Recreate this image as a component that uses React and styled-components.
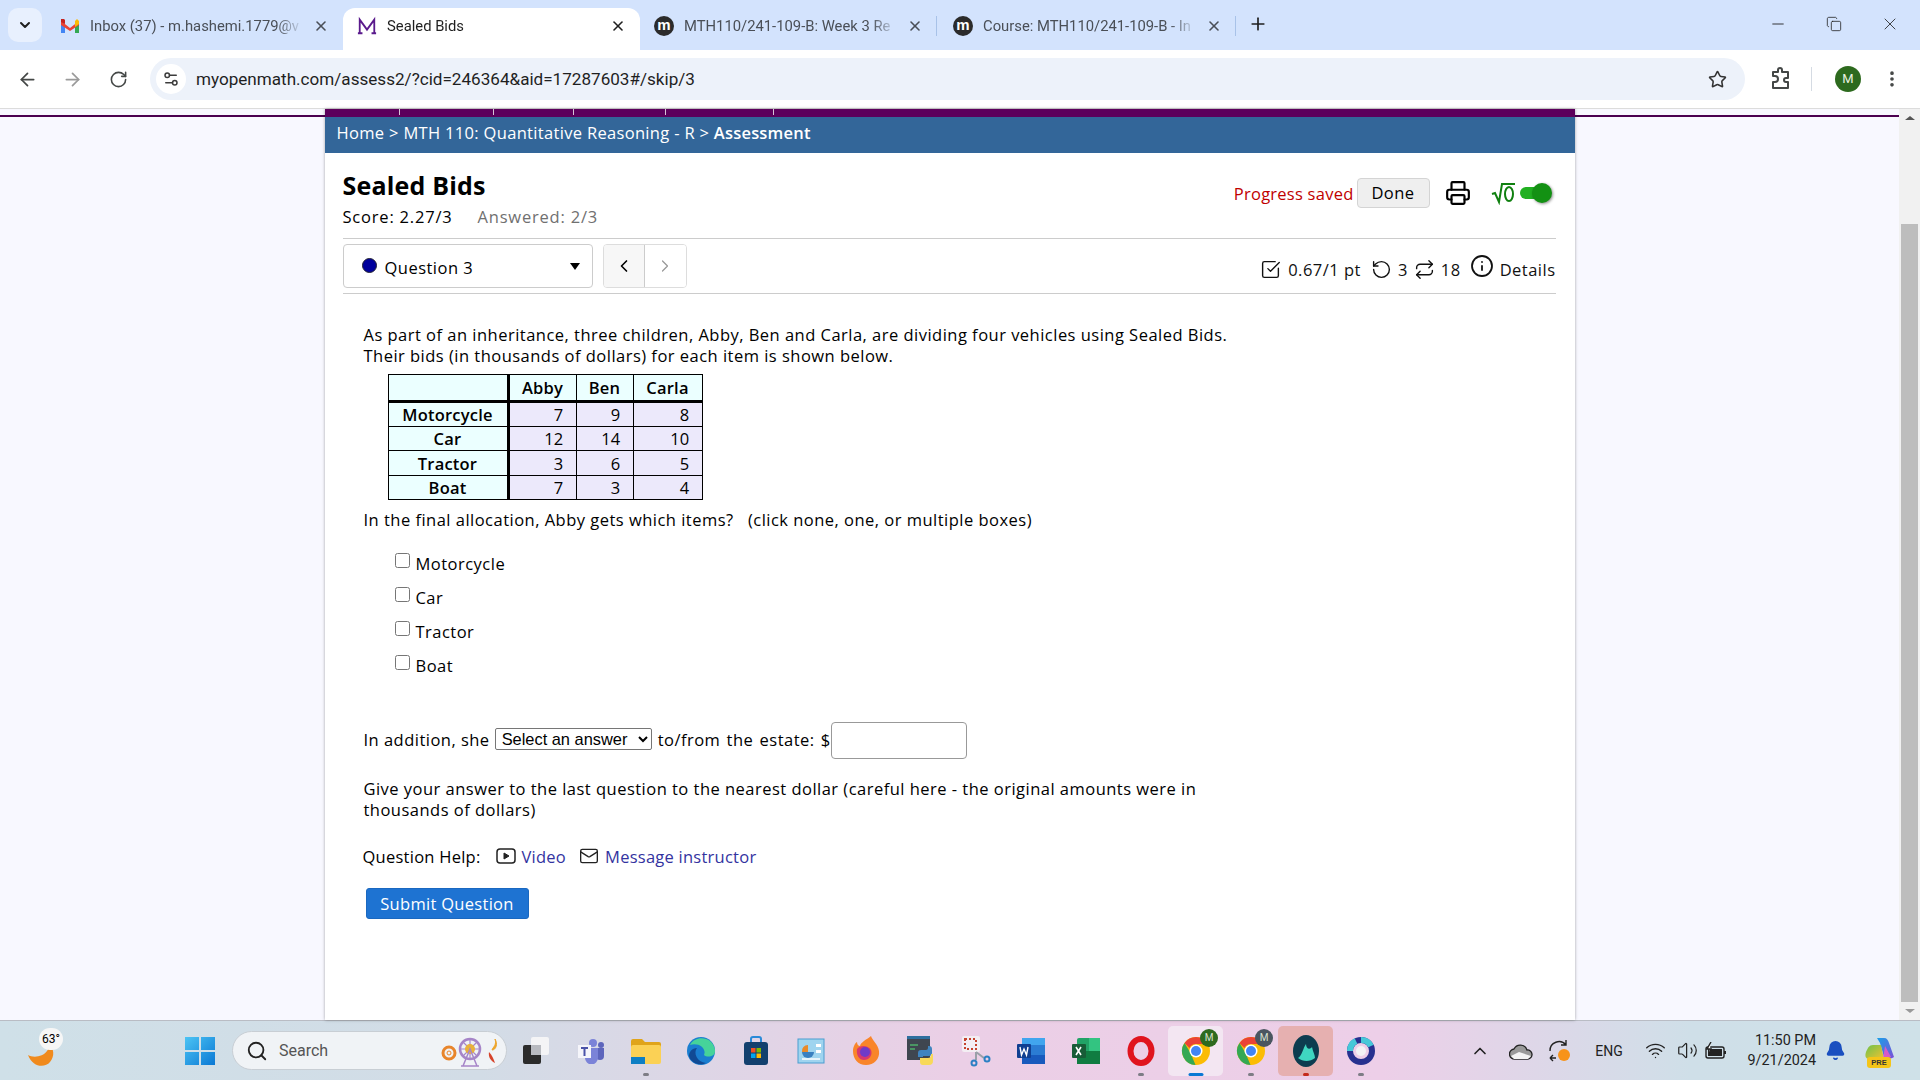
import React from 'react';
import styled, { createGlobalStyle } from 'styled-components';
import {
  ArrowLeft, ArrowRight, RotateCw, X, Plus, Minus, Star, EllipsisVertical, ChevronDown,
  ChevronLeft, ChevronRight, ChevronUp, Printer, SquareCheckBig, RotateCcw, Repeat, Info, Mail,
  Search, Wifi, Volume2, Bell, Settings2, Copy,
} from 'lucide-react';

const pageFont = '"Open Sans", sans-serif';
const textSize = '16.5px';
const textSpacing = '0.48px';

const GlobalStyle = createGlobalStyle`
  html, body { margin: 0; padding: 0; height: 100%; overflow: hidden; }
  body { font-family: ${pageFont}; color: #000; }
  * { box-sizing: border-box; }
`;

const Screen = styled.div`
  width: 1920px;
  height: 1080px;
  display: flex;
  flex-direction: column;
  overflow: hidden;
`;

/* browser chrome */
const TabStrip = styled.div`
  height: 50px;
  background: #d3e3fd;
  display: flex;
  align-items: flex-start;
  padding: 8px 2px 0 8px;
  position: relative;
`;

const TabSearch = styled.div`
  width: 34px;
  height: 34px;
  border-radius: 10px;
  background: #e8f0fe;
  display: flex;
  align-items: center;
  justify-content: center;
  margin-right: 4px;
  color: #1f1f1f;
`;

const Tab = styled.div`
  width: 297px;
  height: 42px;
  display: flex;
  align-items: center;
  padding: 0 14px 6px 14px;
  gap: 10px;
  border-radius: 12px 12px 0 0;
  background: ${({ $active }) => ($active ? '#fff' : 'transparent')};
  font-family: "Roboto", sans-serif;
  font-size: 14.8px;
  color: ${({ $active }) => ($active ? '#1f1f1f' : '#4a4f57')};
`;

const TabTitle = styled.span`
  flex: 1;
  white-space: nowrap;
  overflow: hidden;
  mask-image: linear-gradient(to right, #000 88%, transparent);
`;

const TabDivider = styled.div`
  width: 1px;
  height: 20px;
  background: #a8c2e8;
  margin: 8px 2px 0 -1px;
`;

const NewTab = styled.div`
  color: #1f1f1f;
  display: flex;
  margin: 6px 0 0 10px;
`;

const WindowControls = styled.div`
  margin-left: auto;
  display: flex;
  align-items: center;
  height: 32px;
  color: #222;
`;

const WindowButton = styled.div`
  width: 56px;
  display: flex;
  justify-content: center;
`;

const MomIcon = styled.span`
  width: 20px;
  height: 20px;
  border-radius: 50%;
  background: #2b2b2b;
  color: #fff;
  font: bold 15px/17px "Liberation Sans", sans-serif;
  text-align: center;
  flex: none;
`;

const Toolbar = styled.div`
  height: 59px;
  background: #fff;
  border-radius: 10px 10px 0 0;
  border-bottom: 1px solid #dcdcdc;
  display: flex;
  align-items: center;
  padding-left: 5px;
  color: #444746;
`;

const NavSlot = styled.div`
  width: ${({ $w }) => $w || 45}px;
  display: flex;
  justify-content: center;
  color: ${({ $dim }) => ($dim ? '#9a9a9a' : '#444746')};
`;

const Omnibox = styled.div`
  width: 1595px;
  height: 42px;
  margin-left: 9px;
  border-radius: 21px;
  background: #edf2fa;
  display: flex;
  align-items: center;
  padding: 0 18px 0 6px;
  font-family: "Roboto", sans-serif;
  font-size: 17.1px;
  color: #1f1f1f;
`;

const TuneButton = styled.div`
  width: 30px;
  height: 30px;
  border-radius: 50%;
  background: #fff;
  display: flex;
  align-items: center;
  justify-content: center;
  margin-right: 10px;
`;

const Url = styled.span`
  flex: 1;
`;

const ToolDivider = styled.div`
  width: 1px;
  height: 24px;
  background: #d5dbe3;
  margin: 0 8px 0 -6px;
`;

const Avatar = styled.div`
  width: 26px;
  height: 26px;
  border-radius: 50%;
  background: #2d6a1e;
  color: #e8f0e0;
  font: 13px/26px "Roboto", sans-serif;
  text-align: center;
  margin: 0 21px 0 15px;
`;

/* page */
const Viewport = styled.div`
  flex: 1;
  min-height: 0;
  display: flex;
  background: #f8f8ff;
`;

const PageArea = styled.div`
  flex: 1;
  display: flex;
  justify-content: center;
  position: relative;
`;

const OuterRule = styled.div`
  position: absolute;
  top: 6px;
  left: 0;
  right: 0;
  height: 2px;
  background: #4b0050;
`;

const Panel = styled.main`
  width: 1250px;
  background: #fff;
  position: relative;
  box-shadow: 0 0 3px rgba(0, 0, 0, 0.35);
`;

const PurpleBar = styled.div`
  height: 8px;
  background: #5c005c;
  display: flex;
  padding-left: 74px;
`;

const PurpleTick = styled.div`
  width: ${({ $w }) => $w}px;
  height: 6px;
  border-left: 1px solid #d8c4d8;
`;

const Breadcrumb = styled.div`
  height: 36px;
  background: #336699;
  color: #fff;
  font-size: ${textSize};
  font-weight: 500;
  letter-spacing: 0.32px;
  line-height: 31px;
  padding-left: 12px;
`;

const Current = styled.span`
  font-weight: 600;
  letter-spacing: 0.2px;
`;

const Content = styled.div`
  padding: 0 19px 0 18px;
`;

const HeaderRow = styled.div`
  height: 86px;
  border-bottom: 1px solid #ccc;
  display: flex;
  justify-content: space-between;
`;

const HeaderLeft = styled.div`
  padding-top: 16px;
`;

const Title = styled.h1`
  margin: 0;
  font-size: 25px;
  line-height: 32px;
  font-weight: 700;
  letter-spacing: 0.2px;
`;

const ScoreLine = styled.div`
  display: flex;
  gap: 25px;
  margin-top: 5px;
  font-size: ${textSize};
  letter-spacing: 0.8px;
  line-height: 22px;
`;

const Answered = styled.span`
  color: #707070;
`;

const HeaderRight = styled.div`
  display: flex;
  align-items: center;
  height: 48px;
  margin-top: 16px;
`;

const Saved = styled.span`
  color: #c00000;
  font-size: ${textSize};
  letter-spacing: 0.25px;
  margin-right: 3px;
`;

const DoneButton = styled.div`
  width: 73px;
  height: 30px;
  background: #efefef;
  border: 1px solid #d4d4d4;
  border-radius: 4px;
  font-size: ${textSize};
  letter-spacing: ${textSpacing};
  line-height: 28px;
  text-align: center;
  margin-right: 15px;
`;

const MathToggle = styled.div`
  display: flex;
  align-items: center;
  margin: 0 8px 0 20px;
  color: #108010;
`;

const ToggleTrack = styled.div`
  width: 28px;
  height: 12px;
  border-radius: 6px;
  background: #21b021;
  margin-left: 4px;
  position: relative;
`;

const ToggleKnob = styled.div`
  position: absolute;
  right: -4px;
  top: -4px;
  width: 20px;
  height: 20px;
  border-radius: 50%;
  background: #139113;
  box-shadow: 1px 1px 3px rgba(0, 0, 0, 0.45);
`;

const NavRow = styled.div`
  height: 55px;
  border-bottom: 1px solid #ccc;
  display: flex;
  align-items: flex-start;
  padding-top: 5px;
`;

const QuestionSelect = styled.div`
  width: 250px;
  height: 44px;
  border: 1px solid #ccc;
  border-radius: 4px;
  display: flex;
  align-items: center;
  padding: 2px 12px 0 18px;
  font-size: ${textSize};
  letter-spacing: ${textSpacing};
`;

const Dot = styled.span`
  width: 15px;
  height: 15px;
  border-radius: 50%;
  background: #00009c;
  border: 1px solid #223;
  margin: -4px 8px 0 0;
`;

const Caret = styled.span`
  margin: -2px 0 0 auto;
  width: 0;
  height: 0;
  border-left: 5px solid transparent;
  border-right: 5px solid transparent;
  border-top: 7px solid #000;
`;

const PagerGroup = styled.div`
  display: flex;
  margin-left: 10px;
  height: 44px;
  width: 84px;
  border: 1px solid #ddd;
  border-radius: 4px;
  overflow: hidden;
`;

const PagerButton = styled.div`
  width: 42px;
  display: flex;
  align-items: center;
  justify-content: center;
  background: ${({ $off }) => ($off ? '#fff' : '#f7f7f7')};
  color: ${({ $off }) => ($off ? '#999' : '#000')};
  border-right: ${({ $off }) => ($off ? 'none' : '1px solid #ccc')};
`;

const Stats = styled.div`
  margin-left: auto;
  display: flex;
  align-items: center;
  height: 46px;
  font-size: ${textSize};
  letter-spacing: ${textSpacing};
  color: #111;
`;

const Stat = styled.span`
  display: flex;
  align-items: center;
  gap: ${({ $gap }) => $gap || 4}px;
  margin-left: ${({ $ml }) => $ml || 0}px;
  padding-top: 5px;
`;

const RaisedIcon = styled.span`
  display: flex;
  margin-top: -7px;
`;

const Body = styled.div`
  padding-left: 21px;
  font-size: ${textSize};
  letter-spacing: ${textSpacing};
  line-height: 21px;
`;

const Para = styled.p`
  margin: ${({ $mt }) => $mt}px 0 0;
`;

const BidTable = styled.table`
  border-collapse: collapse;
  margin: 8px 0 0 24px;
  table-layout: fixed;
  width: 314px;
  line-height: 20px;

  td, th {
    border: 1px solid #000;
    padding: 2px 0 0;
    height: 24.5px;
    font-weight: 600;
    letter-spacing: 0.2px;
  }
`;

const HeadCell = styled.th`
  background: #ebffff;
  text-align: center;
  width: ${({ $w }) => $w}px;

  &&& {
    border-bottom: 3px solid #000;
    height: 27px;
    padding-top: 0;
    ${({ $corner }) => $corner && 'border-right: 3px solid #000;'}
  }
`;

const RowCell = styled.td`
  background: #ebffff;
  text-align: center;

  &&& {
    border-right: 3px solid #000;
  }
`;

const DataCell = styled.td`
  background: #ece9fb;
  text-align: right;

  &&& {
    padding-right: 12px;
    font-weight: 400;
  }
`;

const Choices = styled.div`
  margin: 16px 0 0 31px;
`;

const Choice = styled.label`
  height: 34px;
  display: flex;
  align-items: center;
  gap: 6px;
`;

const Check = styled.input`
  width: 15px;
  height: 15px;
  margin: -6px 0 0 0;
`;

const FillRow = styled.div`
  margin-top: 40px;
  height: 36px;
  display: flex;
  align-items: center;
  white-space: pre;
  padding-bottom: 2px;
`;

const EstateLabel = styled.span`
  word-spacing: 1.5px;
`;

const AnswerSelect = styled.select`
  width: 157px;
  height: 22px;
  margin: 0 6px 0 5px;
  font: 16.4px "Liberation Sans", sans-serif;
  letter-spacing: 0;
  background: #fff;
  border: 1px solid #767676;
  border-radius: 2px;
  padding: 0 0 0 2px;
`;

const AmountInput = styled.input`
  width: 136px;
  height: 37px;
  border: 1px solid #999;
  border-radius: 4px;
  margin: 2px 0 0;
`;

const HelpRow = styled.div`
  margin: 24px 0 0 -1px;
  height: 24px;
  display: flex;
  align-items: center;
  letter-spacing: 0.25px;
`;

const HelpLink = styled.a`
  color: #33339f;
  display: flex;
  align-items: center;
  margin-left: ${({ $ml }) => $ml}px;
  gap: 6px;
`;

const SubmitButton = styled.button`
  display: block;
  width: 163px;
  height: 31px;
  margin: 20px 0 0 2px;
  background: #1e73d2;
  border: 1px solid #1a68c0;
  border-radius: 3px;
  color: #fff;
  font: 500 ${textSize} ${pageFont};
  letter-spacing: 0.3px;
  padding: 0;
`;

const Scrollbar = styled.div`
  width: 21px;
  background: #f1f1f1;
  display: flex;
  flex-direction: column;
  align-items: center;
  padding-top: 7px;
`;

const ScrollThumb = styled.div`
  width: 17px;
  height: 778px;
  flex: none;
  background: #bdbdbd;
  margin: 104px 0 7px;
`;

const ArrowUp = styled.div`
  width: 0;
  height: 0;
  border-left: 5px solid transparent;
  border-right: 5px solid transparent;
  border-bottom: 4px solid #555;
`;

const ArrowDown = styled.div`
  width: 0;
  height: 0;
  border-left: 5px solid transparent;
  border-right: 5px solid transparent;
  border-top: 4px solid #999;
`;

/* taskbar */
const Taskbar = styled.footer`
  height: 60px;
  flex: none;
  display: flex;
  align-items: center;
  border-top: 1px solid #b9bcc4;
  background: linear-gradient(90deg, #cfe0e8 0%, #d2dce6 25%, #ebcfe6 50%, #edcfe8 72%, #cfdfe8 88%, #cfe1e8 100%);
  font-family: "Roboto", sans-serif;
`;

const Slot = styled.div`
  width: ${({ $w }) => $w || 55}px;
  height: 50px;
  flex: none;
  display: flex;
  align-items: center;
  justify-content: center;
  position: relative;
  border-radius: 5px;
  background: ${({ $bg }) => $bg || 'transparent'};
`;

const WeatherSlot = styled(Slot)`
  justify-content: flex-start;
  padding: 8px 0 0 27px;
`;

const RunDot = styled.span`
  position: absolute;
  bottom: 0;
  left: 50%;
  transform: translateX(-50%);
  width: ${({ $wide }) => ($wide ? 15 : 6)}px;
  height: 3px;
  border-radius: 2px;
  background: ${({ $color }) => $color || '#7d7d85'};
`;

const WeatherTemp = styled.span`
  position: absolute;
  top: 2px;
  left: 39px;
  width: 24px;
  height: 22px;
  border-radius: 11px;
  background: #f6f6f6;
  font-size: 12px;
  line-height: 22px;
  text-align: center;
`;

const SearchPill = styled.div`
  width: 275px;
  height: 39px;
  margin: 0 1px 0 6px;
  border-radius: 20px;
  background: #f0f3f6;
  border: 1px solid #c8ced4;
  display: flex;
  align-items: center;
  padding: 0 5px 0 13px;
  color: #555;
  font-size: 16px;
  gap: 11px;
`;

const SearchArt = styled.span`
  margin-left: auto;
  display: flex;
`;

const Badge = styled.span`
  position: absolute;
  top: 3px;
  right: 5px;
  width: 18px;
  height: 18px;
  border-radius: 50%;
  background: ${({ $bg }) => $bg};
  color: #d8e0d0;
  font-size: 10px;
  line-height: 18px;
  text-align: center;
`;

const Tray = styled.div`
  margin-left: auto;
  display: flex;
  align-items: center;
  padding-right: 12px;
  color: #222;
`;

const Eng = styled.span`
  font-size: 14px;
`;

const Clock = styled.div`
  width: 87px;
  text-align: right;
  font-size: 14.4px;
  line-height: 20px;
  padding-right: 2px;
  white-space: nowrap;
`;

const Pre = styled.span`
  position: absolute;
  bottom: 8px;
  left: 15px;
  width: 24px;
  height: 11px;
  background: #f5c518;
  border-radius: 3px;
  font: bold 7.5px/11px "Liberation Sans", sans-serif;
  text-align: center;
  color: #333;
`;

const GmailIcon = () => (
  <svg width="20" height="16" viewBox="0 0 20 16">
    <path d="M1 15V3l4 3v9z" fill="#4285f4" />
    <path d="M15 15V6l4-3v12z" fill="#34a853" />
    <path d="M1 3l9 7 9-7v4l-9 6-9-6z" fill="#ea4335" />
    <path d="M15 3l2-2 2 2v3l-4 3z" fill="#fbbc04" />
    <path d="M1 1h3l1 1v4L1 4z" fill="#c5221f" />
  </svg>
);

const SealedIcon = () => (
  <svg width="20" height="20" viewBox="0 0 22 20" fill="none" stroke="#5a1a8c" strokeWidth="2">
    <path d="M3 18V3l8 11 8-11v15" />
    <path d="M1 18h5M16 18h5" />
  </svg>
);

const TuneIcon = () => <Settings2 size={18} strokeWidth={2} color="#3c3c3c" />;

const ExtensionIcon = () => (
  <svg width="22" height="24" viewBox="0 0 22 24" fill="none" stroke="#444746" strokeWidth="2" strokeLinejoin="round">
    <path d="M3 5h5V3a2 2 0 0 1 4 0v2h6v6h-2a2 2 0 0 0 0 4h2v6H3v-6h2a3 3 0 0 0 0-6H3z" />
  </svg>
);

const RootZero = () => (
  <svg width="25" height="24" viewBox="0 0 25 24" fill="none" stroke="#108010" strokeWidth="2">
    <path d="M1 13l3-1 4 9 3-18h13" />
    <ellipse cx="18" cy="13" rx="4" ry="7" />
  </svg>
);

const PlayBoxIcon = () => (
  <svg width="20" height="16" viewBox="0 0 20 16" fill="none" stroke="#222" strokeWidth="1.5">
    <rect x="1" y="1" width="18" height="14" rx="3" />
    <path d="M8 5l5 3-5 3z" fill="#222" strokeWidth="1" />
  </svg>
);

const WeatherIcon = () => (
  <svg width="28" height="26" viewBox="0 0 28 26">
    <path d="M1 13c5 3 15 2 19-4 2-3 3-5 2-8 5 6 6 13 1 19-5 6-17 6-22-7z" fill="#f08a1d" />
  </svg>
);

const WindowsLogo = () => (
  <svg width="30" height="30" viewBox="0 0 30 30">
    <defs>
      <linearGradient id="win" x1="0" y1="0" x2="1" y2="1">
        <stop offset="0" stopColor="#4cc4f4" />
        <stop offset="1" stopColor="#0a78d4" />
      </linearGradient>
    </defs>
    <path d="M0 1h14v13H0zM16 1h14v13H16zM0 16h14v13H0zM16 16h14v13H16z" fill="url(#win)" />
  </svg>
);

const SearchArtwork = () => (
  <svg width="62" height="32" viewBox="0 0 62 32" fill="none">
    <circle cx="10" cy="18" r="6" stroke="#e8852b" strokeWidth="3" />
    <circle cx="10" cy="18" r="2" fill="#f0f3f6" stroke="#e8852b" />
    <circle cx="31" cy="14" r="10" stroke="#a685c8" strokeWidth="2.5" />
    <path d="M31 4v20M21 14h20M24 7l14 14M38 7L24 21" stroke="#a685c8" strokeWidth="1.2" />
    <circle cx="31" cy="14" r="5" fill="#e8b13c" />
    <path d="M24 31l7-17 7 17M22 31h18" stroke="#a685c8" strokeWidth="1.5" />
    <path d="M56 4c2 6-2 8-3 11 4 0 6-6 3-11z" fill="#eda52a" stroke="#eda52a" />
    <path d="M50 17c3 3 5 8 6 11-4-2-7-6-6-11z" fill="#d6432a" />
  </svg>
);

const AppIcon = ({ kind }) => {
  switch (kind) {
    case 'taskview':
      return (
        <svg width="30" height="30" viewBox="0 0 30 30">
          <rect x="10" y="1" width="18" height="18" rx="2" fill="#f4f4f6" />
          <rect x="2" y="9" width="18" height="19" rx="2" fill="#2b2b2b" />
          <rect x="10" y="9" width="10" height="10" fill="#b8bac0" />
        </svg>
      );
    case 'teams':
      return (
        <svg width="28" height="26" viewBox="0 0 28 26">
          <circle cx="16" cy="5" r="4" fill="#7b83d8" />
          <circle cx="24" cy="7" r="3" fill="#5d65bc" />
          <path d="M19 10h8v8a4 4 0 0 1-8 0z" fill="#5d65bc" />
          <path d="M8 10h13v10a6 6 0 0 1-13 0z" fill="#7b83d8" />
          <rect x="1" y="7" width="13" height="13" fill="#f5f5fa" />
          <path d="M4 10h7M7.5 10v8" stroke="#4b53a8" strokeWidth="2" />
        </svg>
      );
    case 'explorer':
      return (
        <svg width="32" height="28" viewBox="0 0 32 28">
          <path d="M1 4a2 2 0 0 1 2-2h9l3 3h14a2 2 0 0 1 2 2v4H1z" fill="#e0a41a" />
          <rect x="1" y="8" width="30" height="19" rx="2" fill="#fbd155" />
          <rect x="1" y="20" width="14" height="7" fill="#0e7fc4" />
        </svg>
      );
    case 'edge':
      return (
        <svg width="30" height="30" viewBox="0 0 30 30">
          <circle cx="15" cy="15" r="14" fill="#1a7ed0" />
          <path d="M4 9C9-1 27 0 29 14c1 7-8 8-11 5 3-7-6-13-14-10z" fill="#46d39a" />
          <path d="M11 12c-4 5 0 14 9 15-5 3-15 1-17-7 0-4 3-8 8-8z" fill="#114a94" />
        </svg>
      );
    case 'store':
      return (
        <svg width="26" height="30" viewBox="0 0 26 30">
          <path d="M8 6V3a2 2 0 0 1 2-2h6a2 2 0 0 1 2 2v3" fill="none" stroke="#2a8ad8" strokeWidth="2" />
          <rect x="1" y="6" width="24" height="23" rx="3" fill="#12406e" />
          <path d="M8 12h4.500v4.500H8z" fill="#f05022" />
          <path d="M13.500 12H18v4.500h-4.500z" fill="#7eb900" />
          <path d="M8 17.500h4.500V22H8z" fill="#00a4ef" />
          <path d="M13.500 17.500H18V22h-4.500z" fill="#ffb900" />
        </svg>
      );
    case 'control':
      return (
        <svg width="28" height="26" viewBox="0 0 28 26">
          <rect x="1" y="1" width="26" height="24" fill="#9fd4ef" stroke="#4a9dd0" />
          <path d="M5 14a6 6 0 0 1 6-7v7z" fill="#e98a2a" />
          <path d="M11 14h6a6 6 0 0 1-12 0z" fill="#3a80c0" />
          <rect x="19" y="6" width="5" height="3" fill="#fff" />
          <rect x="19" y="12" width="5" height="3" fill="#fff" />
          <path d="M5 21h18" stroke="#fff" strokeWidth="1.500" />
        </svg>
      );
    case 'firefox':
      return (
        <svg width="28" height="30" viewBox="0 0 28 30">
          <path d="M19 0c1 4 7 8 8 15 1 8-5 14-13 14S1 23 1 15C1 11 3 7 5 6c0 3 2 4 3 4 1-4 6-6 11-10z" fill="#f9852a" />
          <path d="M5 13c3-4 11-4 14 1 2 5-2 10-7 10s-8-5-7-11z" fill="#d6396e" />
          <circle cx="13" cy="16" r="5" fill="#6f3bc8" />
        </svg>
      );
    case 'python':
      return (
        <svg width="30" height="32" viewBox="0 0 30 32">
          <rect x="1" y="1" width="23" height="24" fill="#3f4650" />
          <rect x="1" y="1" width="23" height="3" fill="#2e6f9e" />
          <path d="M4 10h8M4 14h5" stroke="#4fb06a" strokeWidth="1.500" />
          <path d="M12 22v-4a3 3 0 0 1 3-3h5a2 2 0 0 0 2-2v-2h1a3 3 0 0 1 3 3v4a3 3 0 0 1-3 3h-6v1z" fill="#3f84bf" />
          <path d="M14 23h8a3 3 0 0 0 3-3v-1h2v7a4 4 0 0 1-4 4h-6a3 3 0 0 1-3-3z" fill="#f8d95a" />
        </svg>
      );
    case 'snip':
      return (
        <svg width="30" height="32" viewBox="0 0 30 32" fill="none">
          <rect x="1" y="1" width="18" height="16" rx="2" fill="#f3eef3" />
          <rect x="4" y="4" width="11" height="10" stroke="#c5432e" strokeWidth="2" strokeDasharray="2 2" />
          <path d="M15 17v8M15 17l8 6" stroke="#9aa0a8" strokeWidth="2" />
          <circle cx="13" cy="28" r="2.500" stroke="#2b80c4" strokeWidth="2" />
          <circle cx="26" cy="24" r="2.500" stroke="#2b80c4" strokeWidth="2" />
        </svg>
      );
    case 'word':
      return (
        <svg width="30" height="28" viewBox="0 0 30 28">
          <rect x="6" y="1" width="23" height="26" rx="2" fill="#2b7cd3" />
          <rect x="6" y="1" width="23" height="7" fill="#41a5ee" />
          <rect x="6" y="18" width="23" height="9" fill="#185abd" />
          <rect x="1" y="7" width="14" height="14" rx="1" fill="#103f91" />
          <path d="M4 10l1.500 8L8 12l2.500 6L12 10" fill="none" stroke="#fff" strokeWidth="1.400" />
        </svg>
      );
    case 'excel':
      return (
        <svg width="30" height="28" viewBox="0 0 30 28">
          <rect x="6" y="1" width="23" height="26" rx="2" fill="#21a366" />
          <rect x="18" y="1" width="11" height="13" fill="#33c481" />
          <rect x="6" y="14" width="23" height="13" fill="#107c41" />
          <rect x="1" y="7" width="14" height="14" rx="1" fill="#185c37" />
          <path d="M5 10l5 8M10 10l-5 8" stroke="#fff" strokeWidth="1.600" />
        </svg>
      );
    case 'opera':
      return (
        <svg width="28" height="30" viewBox="0 0 28 30">
          <ellipse cx="14" cy="15" rx="10.500" ry="12" fill="none" stroke="#e0141e" strokeWidth="6" />
        </svg>
      );
    case 'chrome':
      return (
        <svg width="30" height="30" viewBox="0 0 30 30">
          <circle cx="15" cy="15" r="14" fill="#fbbc04" />
          <path d="M15 1a14 14 0 0 1 12 7H15a7 7 0 0 0-6.500 4L3.500 7A14 14 0 0 1 15 1z" fill="#ea4335" />
          <path d="M3.500 7l6 10 5 12A14 14 0 0 1 3.500 7z" fill="#34a853" />
          <circle cx="15" cy="15" r="6.500" fill="#fff" />
          <circle cx="15" cy="15" r="5" fill="#4285f4" />
        </svg>
      );
    case 'edgeDev':
      return (
        <svg width="30" height="34" viewBox="0 0 30 34">
          <ellipse cx="15" cy="17" rx="13" ry="16" fill="#0d3c4f" />
          <path d="M7 24c4-2 5-10 8-14 0 5 4 6 6 3 1 5 3 8 3 11-5 4-12 4-17 0z" fill="#3fd6c0" />
        </svg>
      );
    default:
      return (
        <svg width="30" height="30" viewBox="0 0 30 30" fill="none">
          <circle cx="15" cy="15" r="11" stroke="#27318f" strokeWidth="6" />
          <path d="M15 4a11 11 0 0 1 10 6" stroke="#46c8d8" strokeWidth="6" />
          <path d="M4 15a11 11 0 0 1 6-10" stroke="#46c8d8" strokeWidth="6" />
          <circle cx="15" cy="15" r="5" fill="#f2f2f5" />
        </svg>
      );
  }
};

const CloudIcon = () => (
  <svg width="24" height="18" viewBox="0 0 24 18">
    <path d="M6 17a5 5 0 0 1-1-10 7 7 0 0 1 13 1 4.500 4.500 0 0 1 1 9z" fill="#9a9a9a" stroke="#222" strokeWidth="1.300" />
    <path d="M2 14l8-4 12 4-3 3H5z" fill="#f3f3f3" />
  </svg>
);

const SyncIcon = () => (
  <svg width="26" height="24" viewBox="0 0 26 24" fill="none" stroke="#222" strokeWidth="1.400">
    <path d="M2 12a9 9 0 0 1 16-6M18 1v5h-5" />
    <path d="M2 19h6M2 19l3-3M2 19l3 3" />
    <circle cx="16" cy="16" r="6" fill="#f7931a" stroke="none" />
  </svg>
);

const BatteryIcon = () => (
  <svg width="24" height="18" viewBox="0 0 24 18" fill="none" stroke="#222" strokeWidth="1.400">
    <rect x="2" y="5" width="18" height="11" rx="2" />
    <rect x="4" y="7" width="14" height="7" fill="#222" stroke="none" />
    <path d="M21 9v3" strokeWidth="2" />
    <path d="M7 0L3 7h4l-2 5" stroke="#222" fill="#fff" />
  </svg>
);

const CopilotIcon = () => (
  <svg width="30" height="28" viewBox="0 0 30 28">
    <defs>
      <linearGradient id="cpa" x1="0" y1="0" x2="1" y2="1">
        <stop offset="0" stopColor="#1aa0e8" />
        <stop offset="1" stopColor="#7b4fd8" />
      </linearGradient>
      <linearGradient id="cpb" x1="0" y1="0" x2="1" y2="1">
        <stop offset="0" stopColor="#6fc24a" />
        <stop offset="1" stopColor="#f2c230" />
      </linearGradient>
    </defs>
    <path d="M12 1h7c3 0 4 2 5 5l5 14c-3 2-8 2-10 0L15 6c-1-2-2-3-3-5z" fill="url(#cpa)" />
    <path d="M8 8h8l3 14H4C0 22 0 18 1 15c2-4 3-7 7-7z" fill="url(#cpb)" />
    <path d="M20 9l6 11-8 2z" fill="#d65ac8" />
  </svg>
);

const bids = [
  ['Motorcycle', 7, 9, 8],
  ['Car', 12, 14, 10],
  ['Tractor', 3, 6, 5],
  ['Boat', 7, 3, 4],
];

const items = ['Motorcycle', 'Car', 'Tractor', 'Boat'];

const taskApps = [
  { kind: 'taskview' },
  { kind: 'teams' },
  { kind: 'explorer', dot: true },
  { kind: 'edge' },
  { kind: 'store' },
  { kind: 'control' },
  { kind: 'firefox' },
  { kind: 'python' },
  { kind: 'snip' },
  { kind: 'word' },
  { kind: 'excel' },
  { kind: 'opera', dot: true },
  { kind: 'chrome', bg: '#f3e6f2', dot: true, wide: true, dotColor: '#0a78d4', badge: '#2d6a1e' },
  { kind: 'chrome', dot: true, badge: '#4a5560' },
  { kind: 'edgeDev', bg: '#e6b0b0', dot: true, dotColor: '#c42b1c' },
  { kind: 'orbit', dot: true },
];

export default function App() {
  return (
    <Screen>
      <GlobalStyle />
      <TabStrip>
        <TabSearch><ChevronDown size={16} strokeWidth={3} /></TabSearch>
        <Tab>
          <GmailIcon />
          <TabTitle>Inbox (37) - m.hashemi.1779@v</TabTitle>
          <X size={16} strokeWidth={2.4} />
        </Tab>
        <Tab $active>
          <SealedIcon />
          <TabTitle>Sealed Bids</TabTitle>
          <X size={16} strokeWidth={2.4} />
        </Tab>
        <Tab>
          <MomIcon>m</MomIcon>
          <TabTitle>MTH110/241-109-B: Week 3 Re</TabTitle>
          <X size={16} strokeWidth={2.4} />
        </Tab>
        <TabDivider />
        <Tab>
          <MomIcon>m</MomIcon>
          <TabTitle>Course: MTH110/241-109-B - In</TabTitle>
          <X size={16} strokeWidth={2.4} />
        </Tab>
        <TabDivider />
        <NewTab><Plus size={20} strokeWidth={2} /></NewTab>
        <WindowControls>
          <WindowButton><Minus size={18} strokeWidth={1.2} /></WindowButton>
          <WindowButton><Copy size={16} strokeWidth={1.2} /></WindowButton>
          <WindowButton><X size={20} strokeWidth={1} /></WindowButton>
        </WindowControls>
      </TabStrip>

      <Toolbar>
        <NavSlot><ArrowLeft size={21} strokeWidth={2} /></NavSlot>
        <NavSlot $dim><ArrowRight size={21} strokeWidth={2} /></NavSlot>
        <NavSlot $w={46}><RotateCw size={19} strokeWidth={2} /></NavSlot>
        <Omnibox>
          <TuneButton><TuneIcon /></TuneButton>
          <Url>myopenmath.com/assess2/?cid=246364&amp;aid=17287603#/skip/3</Url>
          <Star size={19} strokeWidth={2} color="#333" />
        </Omnibox>
        <NavSlot $w={72}><ExtensionIcon /></NavSlot>
        <ToolDivider />
        <Avatar>M</Avatar>
        <EllipsisVertical size={20} strokeWidth={2.4} />
      </Toolbar>

      <Viewport>
        <PageArea>
          <OuterRule />
          <Panel>
            <PurpleBar>
              <PurpleTick $w={94} />
              <PurpleTick $w={80} />
              <PurpleTick $w={92} />
              <PurpleTick $w={108} />
              <PurpleTick $w={1} />
            </PurpleBar>
            <Breadcrumb>Home &gt; MTH 110: Quantitative Reasoning - R &gt; <Current>Assessment</Current></Breadcrumb>
            <Content>
              <HeaderRow>
                <HeaderLeft>
                  <Title>Sealed Bids</Title>
                  <ScoreLine>
                    <span>Score: 2.27/3</span>
                    <Answered>Answered: 2/3</Answered>
                  </ScoreLine>
                </HeaderLeft>
                <HeaderRight>
                  <Saved>Progress saved</Saved>
                  <DoneButton>Done</DoneButton>
                  <Printer size={26} strokeWidth={2} />
                  <MathToggle>
                    <RootZero />
                    <ToggleTrack><ToggleKnob /></ToggleTrack>
                  </MathToggle>
                </HeaderRight>
              </HeaderRow>

              <NavRow>
                <QuestionSelect>
                  <Dot />
                  Question 3
                  <Caret />
                </QuestionSelect>
                <PagerGroup>
                  <PagerButton><ChevronLeft size={20} strokeWidth={2} /></PagerButton>
                  <PagerButton $off><ChevronRight size={20} strokeWidth={1.5} /></PagerButton>
                </PagerGroup>
                <Stats>
                  <Stat $gap={7}><SquareCheckBig size={21} strokeWidth={1.6} />0.67/1 pt</Stat>
                  <Stat $ml={10} $gap={6}><RotateCcw size={21} strokeWidth={1.6} />3</Stat>
                  <Stat $ml={6} $gap={6}><Repeat size={21} strokeWidth={1.6} />18</Stat>
                  <Stat $ml={9} $gap={6}>
                    <RaisedIcon><Info size={24} strokeWidth={1.8} /></RaisedIcon>
                    Details
                  </Stat>
                </Stats>
              </NavRow>

              <Body>
                <Para $mt={30}>
                  As part of an inheritance, three children, Abby, Ben and Carla, are dividing four vehicles using Sealed Bids.
                  <br />
                  Their bids (in thousands of dollars) for each item is shown below.
                </Para>
                <BidTable>
                  <thead>
                    <tr>
                      <HeadCell $w={120} $corner />
                      <HeadCell $w={68}>Abby</HeadCell>
                      <HeadCell $w={57}>Ben</HeadCell>
                      <HeadCell $w={69}>Carla</HeadCell>
                    </tr>
                  </thead>
                  <tbody>
                    {bids.map(([name, a, b, c]) => (
                      <tr key={name}>
                        <RowCell>{name}</RowCell>
                        <DataCell>{a}</DataCell>
                        <DataCell>{b}</DataCell>
                        <DataCell>{c}</DataCell>
                      </tr>
                    ))}
                  </tbody>
                </BidTable>
                <Para $mt={9}>In the final allocation, Abby gets which items?&nbsp;&nbsp; (click none, one, or multiple boxes)</Para>
                <Choices>
                  {items.map((item) => (
                    <Choice key={item}>
                      <Check type="checkbox" />
                      {item}
                    </Choice>
                  ))}
                </Choices>
                <FillRow>
                  In addition, she
                  <AnswerSelect defaultValue="">
                    <option value="">Select an answer</option>
                  </AnswerSelect>
                  <EstateLabel>to/from the estate: $</EstateLabel>
                  <AmountInput type="text" />
                </FillRow>
                <Para $mt={20}>
                  Give your answer to the last question to the nearest dollar (careful here - the original amounts were in
                  <br />
                  thousands of dollars)
                </Para>
                <HelpRow>
                  Question Help:
                  <HelpLink $ml={15}><PlayBoxIcon />Video</HelpLink>
                  <HelpLink $ml={13}><Mail size={20} strokeWidth={1.6} color="#222" />Message instructor</HelpLink>
                </HelpRow>
                <SubmitButton>Submit Question</SubmitButton>
              </Body>
            </Content>
          </Panel>
        </PageArea>
        <Scrollbar>
          <ArrowUp />
          <ScrollThumb />
          <ArrowDown />
        </Scrollbar>
      </Viewport>

      <Taskbar>
        <WeatherSlot $w={174}>
          <WeatherIcon />
          <WeatherTemp>63°</WeatherTemp>
        </WeatherSlot>
        <Slot $w={52}><WindowsLogo /></Slot>
        <SearchPill>
          <Search size={22} strokeWidth={2} color="#222" />
          Search
          <SearchArt><SearchArtwork /></SearchArt>
        </SearchPill>
        {taskApps.map((app, i) => (
          <Slot key={i} $bg={app.bg}>
            <AppIcon kind={app.kind} />
            {app.badge && <Badge $bg={app.badge}>M</Badge>}
            {app.dot && <RunDot $wide={app.wide} $color={app.dotColor} />}
          </Slot>
        ))}
        <Tray>
          <Slot $w={40}><ChevronUp size={20} strokeWidth={2} /></Slot>
          <Slot $w={41}><CloudIcon /></Slot>
          <Slot $w={40}><SyncIcon /></Slot>
          <Slot $w={56}><Eng>ENG</Eng></Slot>
          <Slot $w={36}><Wifi size={21} strokeWidth={1.6} /></Slot>
          <Slot $w={28}><Volume2 size={21} strokeWidth={1.4} /></Slot>
          <Slot $w={30}><BatteryIcon /></Slot>
          <Clock>11:50 PM<br />9/21/2024</Clock>
          <Slot $w={34}><Bell size={21} fill="#1a4fc0" color="#1a4fc0" /></Slot>
          <Slot $w={56}><CopilotIcon /><Pre>PRE</Pre></Slot>
        </Tray>
      </Taskbar>
    </Screen>
  );
}
